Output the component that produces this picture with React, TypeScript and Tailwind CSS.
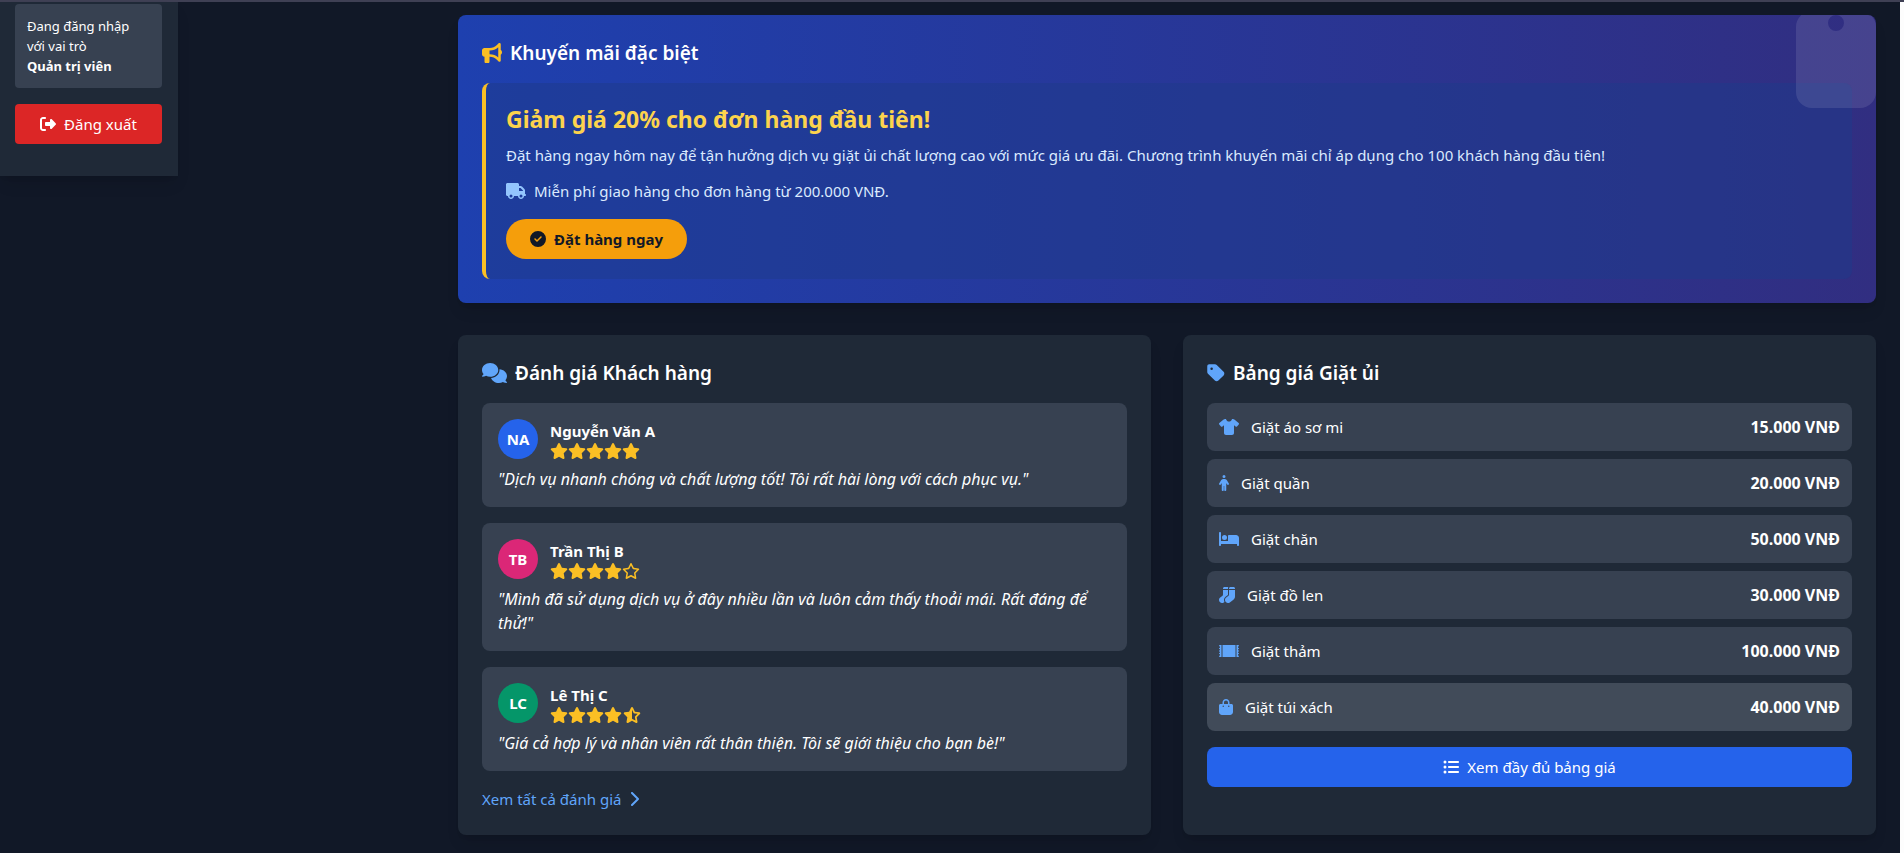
import type { ComponentType } from "react";
import {
  FaBagShopping,
  FaBed,
  FaBullhorn,
  FaChevronRight,
  FaCircleCheck,
  FaComments,
  FaListUl,
  FaPerson,
  FaRegStar,
  FaRightFromBracket,
  FaRug,
  FaShirt,
  FaSocks,
  FaStar,
  FaStarHalfStroke,
  FaTag,
  FaTruck,
} from "react-icons/fa6";

type Icon = ComponentType<{ className?: string }>;

interface Review {
  initials: string;
  name: string;
  color: string;
  rating: number;
  quote: string;
}

interface Price {
  icon: Icon;
  iconWidth: string;
  label: string;
  price: string;
  highlighted?: boolean;
}

const reviews: Review[] = [
  {
    initials: "NA",
    name: "Nguyễn Văn A",
    color: "bg-[#2563eb]",
    rating: 5,
    quote: "Dịch vụ nhanh chóng và chất lượng tốt! Tôi rất hài lòng với cách phục vụ.",
  },
  {
    initials: "TB",
    name: "Trần Thị B",
    color: "bg-[#db2777]",
    rating: 4,
    quote: "Mình đã sử dụng dịch vụ ở đây nhiều lần và luôn cảm thấy thoải mái. Rất đáng để thử!",
  },
  {
    initials: "LC",
    name: "Lê Thị C",
    color: "bg-[#059669]",
    rating: 4.5,
    quote: "Giá cả hợp lý và nhân viên rất thân thiện. Tôi sẽ giới thiệu cho bạn bè!",
  },
];

const prices: Price[] = [
  { icon: FaShirt, iconWidth: "w-5", label: "Giặt áo sơ mi", price: "15.000 VNĐ" },
  { icon: FaPerson, iconWidth: "w-2.5", label: "Giặt quần", price: "20.000 VNĐ" },
  { icon: FaBed, iconWidth: "w-5", label: "Giặt chăn", price: "50.000 VNĐ" },
  { icon: FaSocks, iconWidth: "w-4", label: "Giặt đồ len", price: "30.000 VNĐ" },
  { icon: FaRug, iconWidth: "w-5", label: "Giặt thảm", price: "100.000 VNĐ" },
  { icon: FaBagShopping, iconWidth: "w-3.5", label: "Giặt túi xách", price: "40.000 VNĐ", highlighted: true },
];

function Stars({ rating }: { rating: number }) {
  return (
    <div className="flex text-[#fbbf24]" role="img" aria-label={`${rating}/5`}>
      {[1, 2, 3, 4, 5].map((n) => {
        if (rating >= n) return <FaStar key={n} className="h-4 w-[18px]" />;
        if (rating >= n - 0.5) return <FaStarHalfStroke key={n} className="h-4 w-5" />;
        return <FaRegStar key={n} className="h-4 w-[18px]" />;
      })}
    </div>
  );
}

function Sidebar() {
  return (
    <aside className="w-[178px] shrink-0 bg-[#1f2937] pt-0.5 pr-4 pb-8 pl-[15px] shadow-lg">
      <div className="mb-4 rounded bg-[#374151] p-3 text-[13px] leading-5">
        <p>Đang đăng nhập với vai trò</p>
        <p className="font-bold">Quản trị viên</p>
      </div>
      <button className="flex h-10 w-full items-center justify-center gap-2 rounded bg-[#dc2626]">
        <FaRightFromBracket className="size-4" />
        Đăng xuất
      </button>
    </aside>
  );
}

function Promotion() {
  return (
    <section className="relative overflow-hidden rounded-lg bg-linear-to-r/srgb from-[#1e40af] to-[#312e81] p-6 shadow-lg">
      <h2 className="mb-4 flex items-center gap-2 text-[19px] leading-7 font-semibold">
        <FaBullhorn className="size-5 text-[#fbbf24]" />
        Khuyến mãi đặc biệt
      </h2>
      <div className="rounded-lg border-l-4 border-[#fbbf24] bg-[#1e3a8a]/50 p-5 text-[#dbeafe]">
        <h3 className="mb-2 text-[23px] leading-8 font-bold text-[#fcd34d]">
          Giảm giá 20% cho đơn hàng đầu tiên!
        </h3>
        <p className="mb-3">
          Đặt hàng ngay hôm nay để tận hưởng dịch vụ giặt ủi chất lượng cao với mức giá ưu đãi.
          Chương trình khuyến mãi chỉ áp dụng cho 100 khách hàng đầu tiên!
        </p>
        <p className="mb-4 flex items-center gap-2">
          <FaTruck className="h-4 w-5 text-[#93c5fd]" />
          Miễn phí giao hàng cho đơn hàng từ 200.000 VNĐ.
        </p>
        <button className="flex h-10 items-center gap-2 rounded-full bg-[#f59e0b] px-6 font-bold text-[#111827]">
          <FaCircleCheck className="size-4" />
          Đặt hàng ngay
        </button>
      </div>
      <svg className="absolute -top-1 right-0 h-[97px] w-20 text-white/10" viewBox="0 0 80 97" aria-hidden="true">
        <path
          fill="currentColor"
          fillRule="evenodd"
          d="M16 0H64A16 16 0 0 1 80 16V81A16 16 0 0 1 64 97H16A16 16 0 0 1 0 81V16A16 16 0 0 1 16 0ZM40 4A8 8 0 1 0 40 20A8 8 0 1 0 40 4Z"
        />
      </svg>
    </section>
  );
}

function Reviews() {
  return (
    <section className="rounded-lg bg-[#1f2937] p-6 shadow-lg">
      <h2 className="mb-4 flex items-center gap-2 text-[19px] leading-7 font-semibold">
        <FaComments className="h-5 w-[25px] text-[#60a5fa]" />
        Đánh giá Khách hàng
      </h2>
      <ul className="flex flex-col gap-4">
        {reviews.map((r) => (
          <li key={r.name} className="rounded-lg bg-[#374151] p-4">
            <div className="mb-2 flex items-center gap-3">
              <div className={`flex size-10 items-center justify-center rounded-full font-bold ${r.color}`}>
                {r.initials}
              </div>
              <div>
                <h3 className="font-bold">{r.name}</h3>
                <Stars rating={r.rating} />
              </div>
            </div>
            <p className="text-base italic">{`"${r.quote}"`}</p>
          </li>
        ))}
      </ul>
      <a href="#reviews" className="mt-4 flex items-center gap-2 text-[#60a5fa]">
        Xem tất cả đánh giá
        <FaChevronRight className="h-4 w-2.5" />
      </a>
    </section>
  );
}

function PriceList() {
  return (
    <section className="rounded-lg bg-[#1f2937] p-6 shadow-lg">
      <h2 className="mb-4 flex items-center gap-2 text-[19px] leading-7 font-semibold">
        <FaTag className="h-5 w-[18px] text-[#60a5fa]" />
        Bảng giá Giặt ủi
      </h2>
      <ul className="mb-4 flex flex-col gap-2">
        {prices.map(({ icon: ItemIcon, iconWidth, label, price, highlighted }) => (
          <li
            key={label}
            className={`flex items-center gap-3 rounded-lg p-3 ${highlighted ? "bg-[#414b59]" : "bg-[#374151]"}`}
          >
            <ItemIcon className={`h-4 text-[#60a5fa] ${iconWidth}`} />
            <span>{label}</span>
            <span className="ml-auto text-base font-bold">{price}</span>
          </li>
        ))}
      </ul>
      <button className="flex h-10 w-full items-center justify-center gap-2 rounded-lg bg-[#2563eb]">
        <FaListUl className="size-4" />
        Xem đầy đủ bảng giá
      </button>
    </section>
  );
}

export default function App() {
  return (
    <div className="flex min-h-screen flex-col border-t-2 border-[#3f4054] bg-[#111827] font-['Segoe_UI','Noto_Sans',sans-serif] text-[15px] leading-6 text-white">
      <div className="flex grow border-r-4 border-[#fdfdfd]">
        <div className="w-[458px] shrink-0">
          <Sidebar />
        </div>
        <main className="grow pt-[13px] pr-6 pb-4">
          <Promotion />
          <div className="mt-8 grid grid-cols-2 gap-8">
            <Reviews />
            <PriceList />
          </div>
        </main>
      </div>
    </div>
  );
}
